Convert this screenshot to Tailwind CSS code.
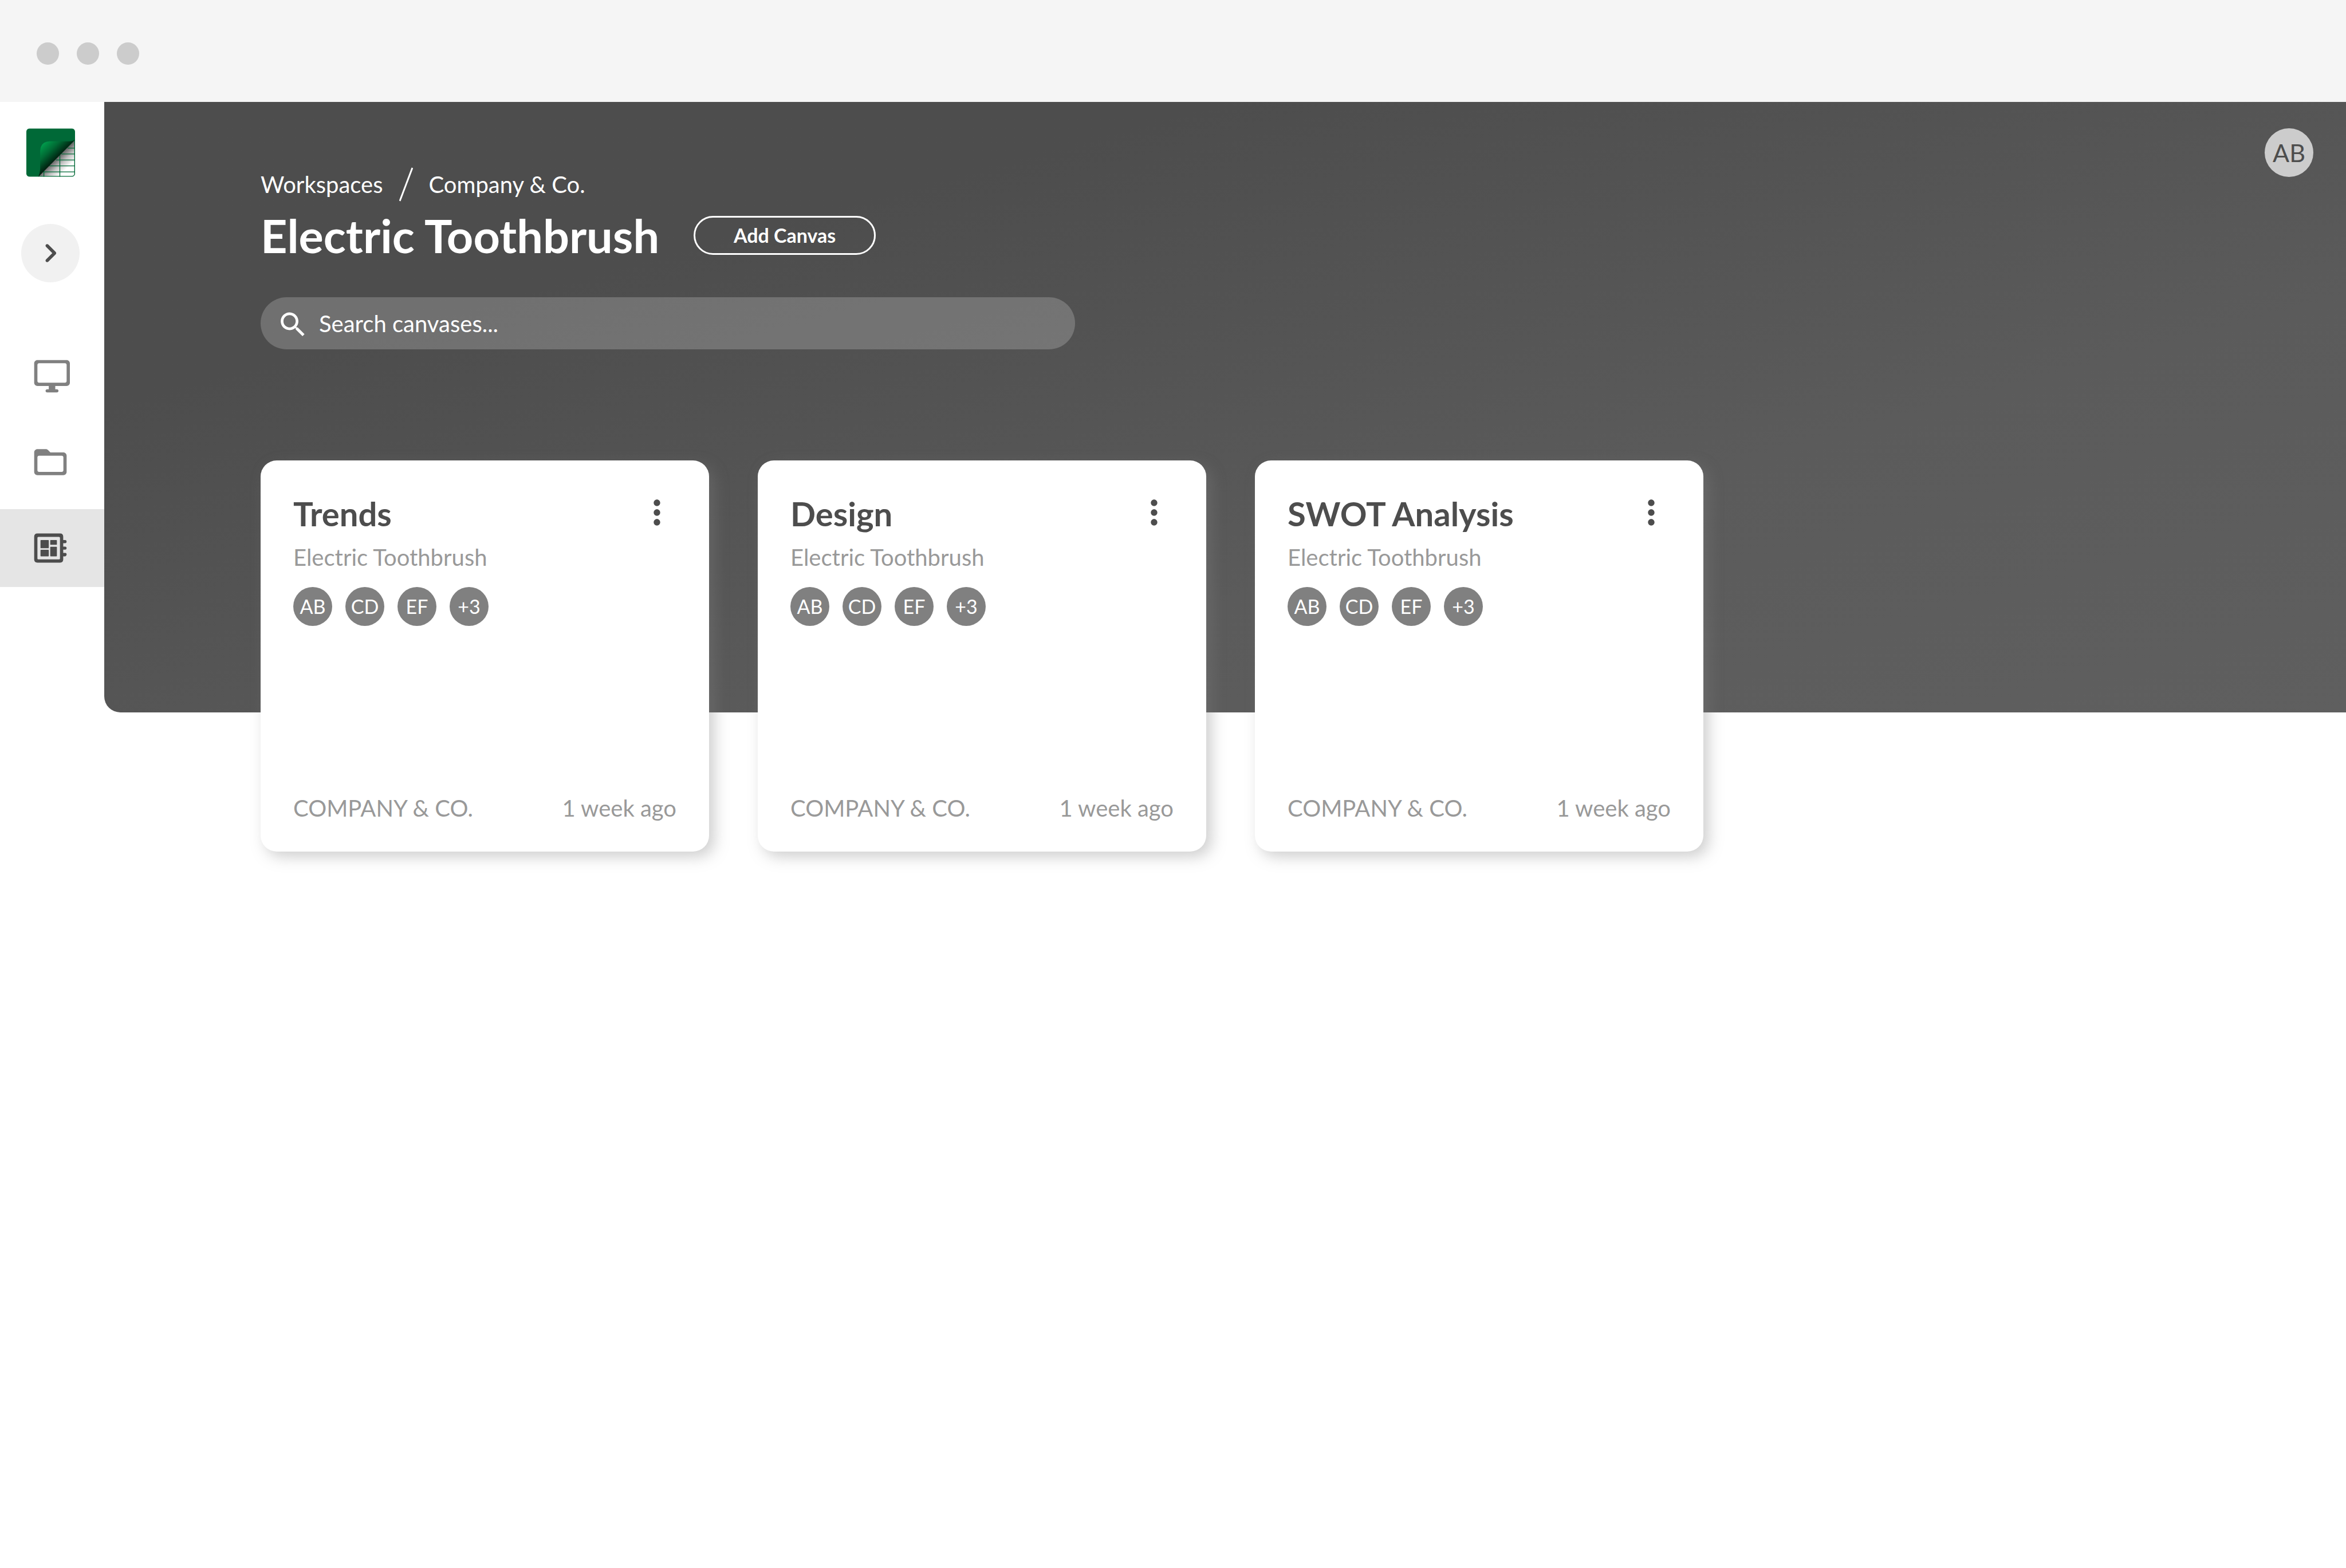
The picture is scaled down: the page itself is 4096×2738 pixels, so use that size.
<!DOCTYPE html>
<html lang="en">
<head>
<meta charset="utf-8">
<title>Electric Toothbrush</title>
<script src="https://cdn.jsdelivr.net/npm/@tailwindcss/browser@4"></script>
</head>
<body class="min-h-screen bg-white font-['Lato',sans-serif] text-[40px] leading-[48px] text-[#4d4d4d]">
  <header class="flex h-[178px] items-center gap-[31px] bg-[#f5f5f5] px-[64px] pt-[8px]">
    <span class="size-[39px] rounded-full bg-[#ccc]"></span>
    <span class="size-[39px] rounded-full bg-[#ccc]"></span>
    <span class="size-[39px] rounded-full bg-[#ccc]"></span>
  </header>

  <div class="flex">
    <nav class="flex w-[182px] shrink-0 flex-col pt-[46px]" aria-label="Main">
      <a href="#" class="ml-[46px] block size-[85px]" aria-label="Home">
        <svg viewBox="0 0 125 124" class="size-full">
          <defs>
            <linearGradient id="fold" gradientUnits="userSpaceOnUse" x1="42" y1="42" x2="78" y2="80">
              <stop offset="0" stop-color="#00984a"/><stop offset=".45" stop-color="#006a34"/><stop offset="1" stop-color="#001c0e"/>
            </linearGradient>
            <linearGradient id="shade" gradientUnits="userSpaceOnUse" x1="78" y1="76" x2="104" y2="103">
              <stop offset="0" stop-color="#666"/><stop offset=".5" stop-color="#c4c4c4"/><stop offset="1" stop-color="#fff"/>
            </linearGradient>
            <clipPath id="tile"><rect width="125" height="124" rx="8"/></clipPath>
          </defs>
          <g clip-path="url(#tile)">
            <rect width="125" height="124" fill="#006937"/>
            <path d="M31 122L123 32V116Q123 122 116 122Z" fill="url(#shade)"/>
            <path d="M106 50.500H125M90 65.500H125M59 96H125" stroke="#006937" stroke-width="2"/>
            <path d="M76 81H125M43 111.500H125" stroke="#006937" stroke-opacity=".6" stroke-width="3.500"/>
            <path d="M86 67V124M45 108V124" stroke="#006937" stroke-width="2"/>
            <path d="M31 124Q35 114 35.500 104V58Q36 34 60 33H112Q119 33 125 29Z" fill="url(#fold)"/>
          </g>
        </svg>
      </a>
      <button type="button" class="mt-[82px] ml-[37px] flex size-[102px] items-center justify-center rounded-full bg-[#f1f1f1]" aria-label="Expand menu">
        <svg viewBox="0 0 24 24" class="size-[68px] fill-[#4d4d4d]"><path d="M9.290 15.880L13.170 12 9.290 8.120c-.39-.39-.39-1.020 0-1.410.39-.39 1.020-.39 1.410 0l4.590 4.590c.39.39.39 1.020 0 1.410L10.700 17.300c-.39.39-1.020.39-1.410 0-.38-.39-.39-1.030 0-1.420z"/></svg>
      </button>
      <div class="mt-[96px] flex flex-col gap-[14px]">
        <a href="#" class="flex h-[136px] items-center pl-[54px]" aria-label="Desktop">
          <svg viewBox="-1 0 24 24" class="size-[68px] fill-[#808080]"><path d="M21 2H3c-1.100 0-2 .9-2 2v12c0 1.100.9 2 2 2h7v2H9c-.55 0-1 .45-1 1s.45 1 1 1h6c.55 0 1-.45 1-1s-.45-1-1-1h-1v-2h7c1.100 0 2-.9 2-2V4c0-1.100-.9-2-2-2zm-1 14H4c-.55 0-1-.45-1-1V5c0-.55.45-1 1-1h16c.55 0 1 .45 1 1v10c0 .55-.45 1-1 1z"/></svg>
        </a>
        <a href="#" class="flex h-[136px] items-center pl-[54px]" aria-label="Folders">
          <svg viewBox="0 0 24 24" class="size-[68px] fill-[#808080]"><path d="M20 6h-8l-1.410-1.410C10.210 4.210 9.700 4 9.170 4H4c-1.100 0-1.990.9-1.990 2L2 18c0 1.100.9 2 2 2h16c1.100 0 2-.9 2-2V8c0-1.100-.9-2-2-2zm-1 12H5c-.55 0-1-.45-1-1V9c0-.55.45-1 1-1h14c.55 0 1 .45 1 1v8c0 .55-.45 1-1 1z"/></svg>
        </a>
        <a href="#" class="flex h-[136px] items-center bg-[#e5e5e5] pl-[54px]" aria-label="Canvases" aria-current="page">
          <svg viewBox="0 0 24 24" class="size-[68px] fill-[#4d4d4d]"><path fill-rule="evenodd" d="M4 3H18Q19.900 3 19.900 5V7.100H21.200Q22 7.100 22 8T21.200 9H19.900V11.100H21.200Q22 11.100 22 12T21.200 13H19.900V15H21.200Q22 15 22 16T21.200 17.100H19.900V19Q19.900 21 18 21H4Q2 21 2 19V5Q2 3 4 3ZM4.600 5.100Q4 5.100 4 5.700V18.400Q4 19 4.600 19H17.300Q17.900 19 17.900 18.400V5.700Q17.900 5.100 17.300 5.100Z"/><rect x="5.900" y="7.100" width="5.100" height="5" rx=".3"/><rect x="5.900" y="13.100" width="5.100" height="4" rx=".3"/><rect x="11.900" y="7.100" width="4.100" height="2.900" rx=".3"/><rect x="11.900" y="11.200" width="4.100" height="5.900" rx=".3"/></svg>
        </a>
      </div>
    </nav>

    <main class="min-w-0 flex-1">
      <section class="h-[1066px] rounded-bl-[28px] bg-linear-to-br from-[#4d4d4d] from-25% via-[#5b5b5b] via-66% to-[#5f5f5f] pt-[46px] pr-[57px] pl-[273px] text-white">
        <div class="flex items-start justify-between">
          <div class="pt-[74px]">
            <nav class="flex items-center" aria-label="Breadcrumb">
              <a href="#">Workspaces</a>
              <svg viewBox="0 0 24 60" class="mx-[28px] -my-[6px] h-[60px] w-[24px] fill-none stroke-white stroke-3" aria-hidden="true"><path d="M1 59L23 1"/></svg>
              <a href="#">Company &amp; Co.</a>
            </nav>
            <div class="mt-[17px] flex items-center gap-[60px]">
              <h1 class="text-[81px] leading-[96px] font-bold">Electric Toothbrush</h1>
              <button type="button" class="h-[68px] w-[318px] rounded-full border-3 border-white text-[34px] leading-[40px] font-bold">Add Canvas</button>
            </div>
          </div>
          <button type="button" class="flex size-[85px] items-center justify-center rounded-full bg-[#ccc] text-[43px] text-[#4d4d4d]" aria-label="Account">AB</button>
        </div>
        <label class="mt-[60px] flex h-[91px] w-[1422px] items-center gap-[17px] rounded-full bg-white/20 pl-[28px]">
          <svg viewBox="0 -1 24 24" class="size-[57px] fill-white" aria-hidden="true"><path d="M15.500 14h-.79l-.28-.27C15.410 12.590 16 11.110 16 9.500 16 5.910 13.090 3 9.500 3S3 5.910 3 9.500 5.910 16 9.500 16c1.610 0 3.090-.59 4.230-1.570l.27.28v.79l5 4.990L20.490 19l-4.990-5zm-6 0C7.010 14 5 11.990 5 9.500S7.010 5 9.500 5 14 7.010 14 9.500 11.990 14 9.500 14z"/></svg>
          <input type="search" placeholder="Search canvases..." aria-label="Search canvases" class="flex-1 bg-transparent outline-none placeholder:text-white">
        </label>
      </section>

      <ul class="-mt-[440px] grid grid-cols-[repeat(auto-fill,783px)] gap-[85px] pl-[273px]">
        <li class="flex h-[683px] flex-col rounded-[28px] bg-white p-[57px] pb-[52px] shadow-[9px_9px_26px_rgb(128_128_128/0.39)]">
          <div class="flex items-start justify-between">
            <h2 class="text-[58px] leading-[72px] font-bold">Trends</h2>
            <button type="button" aria-label="Trends options"><svg viewBox="0 0 24 24" class="size-[68px] fill-[#4d4d4d]"><path d="M12 8c1.100 0 2-.9 2-2s-.9-2-2-2-2 .9-2 2 .9 2 2 2zm0 2c-1.100 0-2 .9-2 2s.9 2 2 2 2-.9 2-2-.9-2-2-2zm0 6c-1.100 0-2 .9-2 2s.9 2 2 2 2-.9 2-2-.9-2-2-2z"/></svg></button>
          </div>
          <p class="mt-[16px] text-[#999]">Electric Toothbrush</p>
          <div class="mt-[28px] flex gap-[23px] text-[34px] text-white">
            <span class="flex size-[68px] items-center justify-center rounded-full bg-[#808080]">AB</span>
            <span class="flex size-[68px] items-center justify-center rounded-full bg-[#808080]">CD</span>
            <span class="flex size-[68px] items-center justify-center rounded-full bg-[#808080]">EF</span>
            <span class="flex size-[68px] items-center justify-center rounded-full bg-[#808080]">+3</span>
          </div>
          <div class="mt-auto flex justify-between text-[#999]"><span>COMPANY &amp; CO.</span><span>1 week ago</span></div>
        </li>
        <li class="flex h-[683px] flex-col rounded-[28px] bg-white p-[57px] pb-[52px] shadow-[9px_9px_26px_rgb(128_128_128/0.39)]">
          <div class="flex items-start justify-between">
            <h2 class="text-[58px] leading-[72px] font-bold">Design</h2>
            <button type="button" aria-label="Design options"><svg viewBox="0 0 24 24" class="size-[68px] fill-[#4d4d4d]"><path d="M12 8c1.100 0 2-.9 2-2s-.9-2-2-2-2 .9-2 2 .9 2 2 2zm0 2c-1.100 0-2 .9-2 2s.9 2 2 2 2-.9 2-2-.9-2-2-2zm0 6c-1.100 0-2 .9-2 2s.9 2 2 2 2-.9 2-2-.9-2-2-2z"/></svg></button>
          </div>
          <p class="mt-[16px] text-[#999]">Electric Toothbrush</p>
          <div class="mt-[28px] flex gap-[23px] text-[34px] text-white">
            <span class="flex size-[68px] items-center justify-center rounded-full bg-[#808080]">AB</span>
            <span class="flex size-[68px] items-center justify-center rounded-full bg-[#808080]">CD</span>
            <span class="flex size-[68px] items-center justify-center rounded-full bg-[#808080]">EF</span>
            <span class="flex size-[68px] items-center justify-center rounded-full bg-[#808080]">+3</span>
          </div>
          <div class="mt-auto flex justify-between text-[#999]"><span>COMPANY &amp; CO.</span><span>1 week ago</span></div>
        </li>
        <li class="flex h-[683px] flex-col rounded-[28px] bg-white p-[57px] pb-[52px] shadow-[9px_9px_26px_rgb(128_128_128/0.39)]">
          <div class="flex items-start justify-between">
            <h2 class="text-[58px] leading-[72px] font-bold">SWOT Analysis</h2>
            <button type="button" aria-label="SWOT Analysis options"><svg viewBox="0 0 24 24" class="size-[68px] fill-[#4d4d4d]"><path d="M12 8c1.100 0 2-.9 2-2s-.9-2-2-2-2 .9-2 2 .9 2 2 2zm0 2c-1.100 0-2 .9-2 2s.9 2 2 2 2-.9 2-2-.9-2-2-2zm0 6c-1.100 0-2 .9-2 2s.9 2 2 2 2-.9 2-2-.9-2-2-2z"/></svg></button>
          </div>
          <p class="mt-[16px] text-[#999]">Electric Toothbrush</p>
          <div class="mt-[28px] flex gap-[23px] text-[34px] text-white">
            <span class="flex size-[68px] items-center justify-center rounded-full bg-[#808080]">AB</span>
            <span class="flex size-[68px] items-center justify-center rounded-full bg-[#808080]">CD</span>
            <span class="flex size-[68px] items-center justify-center rounded-full bg-[#808080]">EF</span>
            <span class="flex size-[68px] items-center justify-center rounded-full bg-[#808080]">+3</span>
          </div>
          <div class="mt-auto flex justify-between text-[#999]"><span>COMPANY &amp; CO.</span><span>1 week ago</span></div>
        </li>
      </ul>
    </main>
  </div>
</body>
</html>
